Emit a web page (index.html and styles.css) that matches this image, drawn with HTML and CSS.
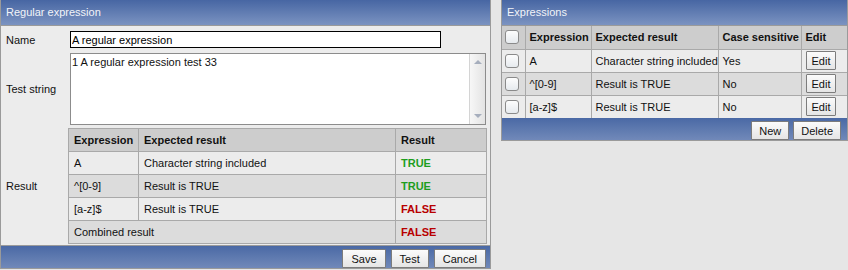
FILE: index.html
```html
<!DOCTYPE html>
<html lang="en">
<head>
    <meta charset="UTF-8">
    <title>Regular expression</title>
    <link rel="stylesheet" href="styles.css">
</head>
<body>
    <div class="page">
        <section class="panel panel-editor">
            <div class="panel-title">Regular expression</div>
            <div class="panel-body">
                <div class="form-row row-name">
                    <label class="form-label" for="exprName">Name</label>
                    <input class="text-input" id="exprName" type="text" value="A regular expression">
                </div>
                <div class="form-row row-test">
                    <label class="form-label" for="testString">Test string</label>
                    <div class="textbox">
                        <textarea id="testString">1 A regular expression test 33</textarea>
                        <div class="scrollbar">
                            <span class="arrow arrow-up"></span>
                            <span class="arrow arrow-down"></span>
                        </div>
                    </div>
                </div>
                <div class="form-row row-result">
                    <span class="form-label">Result</span>
                    <table class="grid result-table">
                        <thead>
                            <tr>
                                <th class="col-expr">Expression</th>
                                <th class="col-expected">Expected result</th>
                                <th class="col-result">Result</th>
                            </tr>
                        </thead>
                        <tbody>
                            <tr>
                                <td>A</td>
                                <td>Character string included</td>
                                <td class="ok">TRUE</td>
                            </tr>
                            <tr>
                                <td>^[0-9]</td>
                                <td>Result is TRUE</td>
                                <td class="ok">TRUE</td>
                            </tr>
                            <tr>
                                <td>[a-z]$</td>
                                <td>Result is TRUE</td>
                                <td class="fail">FALSE</td>
                            </tr>
                            <tr>
                                <td colspan="2">Combined result</td>
                                <td class="fail">FALSE</td>
                            </tr>
                        </tbody>
                    </table>
                </div>
            </div>
            <div class="panel-footer">
                <button class="btn">Save</button>
                <button class="btn">Test</button>
                <button class="btn">Cancel</button>
            </div>
        </section>

        <section class="panel panel-list">
            <div class="panel-title">Expressions</div>
            <table class="grid list-table">
                <thead>
                    <tr>
                        <th class="col-check"><span class="checkbox"></span></th>
                        <th class="col-expr">Expression</th>
                        <th class="col-expected">Expected result</th>
                        <th class="col-case">Case sensitive</th>
                        <th class="col-edit">Edit</th>
                    </tr>
                </thead>
                <tbody>
                    <tr>
                        <td class="col-check"><span class="checkbox"></span></td>
                        <td>A</td>
                        <td>Character string included</td>
                        <td>Yes</td>
                        <td><button class="btn btn-edit">Edit</button></td>
                    </tr>
                    <tr>
                        <td class="col-check"><span class="checkbox"></span></td>
                        <td>^[0-9]</td>
                        <td>Result is TRUE</td>
                        <td>No</td>
                        <td><button class="btn btn-edit">Edit</button></td>
                    </tr>
                    <tr>
                        <td class="col-check"><span class="checkbox"></span></td>
                        <td>[a-z]$</td>
                        <td>Result is TRUE</td>
                        <td>No</td>
                        <td><button class="btn btn-edit">Edit</button></td>
                    </tr>
                </tbody>
            </table>
            <div class="panel-footer list-footer">
                <button class="btn">New</button>
                <button class="btn">Delete</button>
            </div>
        </section>
    </div>
</body>
</html>
```

FILE: styles.css
```css
body {
    margin: 0;
    background: #e6e6e6;
    font-family: "Liberation Sans", Arial, sans-serif;
    font-size: 11px;
    color: #111;
}
.page {
    display: flex;
    align-items: flex-start;
    gap: 10px;
}
.panel {
    box-sizing: border-box;
    border: 1px solid #9a9a9a;
    border-top: none;
    background: #ececec;
}
.panel-editor {
    width: 491px;
}
.panel-list {
    width: 347px;
}
.panel-title {
    height: 25px;
    line-height: 25px;
    padding-left: 5px;
    color: #f2f4f8;
    background: linear-gradient(#4766a3, #7b93c1);
    border-bottom: 1px solid #9a9a9a;
}
.panel-body {
    padding: 5px 0 1px 0;
}
.form-row {
    display: flex;
    align-items: center;
}
.form-label {
    box-sizing: border-box;
    width: 67px;
    padding-left: 5px;
    flex-shrink: 0;
}
.row-test {
    margin-top: 5px;
}
.row-result {
    margin-top: 3px;
}
.text-input {
    box-sizing: border-box;
    width: 371px;
    height: 17px;
    margin: 0 0 0 2px;
    padding: 0 1px;
    border: 1px solid #000;
    font: inherit;
    color: #000;
    background: #fff;
    outline: none;
}
.textbox {
    box-sizing: border-box;
    display: flex;
    width: 416px;
    height: 72px;
    margin-left: 2px;
    border: 1px solid #8c8c8c;
    background: #fff;
}
.textbox textarea {
    flex: 1;
    margin: 0;
    padding: 2px 1px;
    border: none;
    resize: none;
    overflow: hidden;
    font: inherit;
    line-height: 13px;
    color: #111;
    outline: none;
}
.scrollbar {
    width: 16px;
    display: flex;
    flex-direction: column;
    align-items: center;
    justify-content: space-between;
    padding: 6px 0;
    box-sizing: border-box;
    border-left: 1px solid #d4d4d4;
    background: linear-gradient(to right, #f7f7f7, #e3e3e3);
}
.arrow {
    width: 0;
    height: 0;
    border-left: 4px solid transparent;
    border-right: 4px solid transparent;
}
.arrow-up {
    border-bottom: 4px solid #a6aebd;
}
.arrow-down {
    border-top: 4px solid #a6aebd;
}
.grid {
    border-collapse: collapse;
    table-layout: fixed;
}
.grid th, .grid td {
    box-sizing: border-box;
    height: 23px;
    border: 1px solid #a9a9a9;
    padding: 0 5px;
    text-align: left;
    white-space: nowrap;
}
.grid th {
    background: #cdcdcd;
    font-weight: bold;
}
.grid tbody tr:nth-child(odd) td {
    background: #ececec;
}
.grid tbody tr:nth-child(even) td {
    background: #dcdcdc;
}
.result-table {
    width: 419px;
}
.result-table .col-expr {
    width: 70px;
}
.result-table .col-expected {
    width: 257px;
}
.ok, .fail {
    font-weight: bold;
}
.ok {
    color: #1e9e1e;
}
.fail {
    color: #b80000;
}
.list-table {
    width: 345px;
    border-style: hidden;
}
.list-table th, .list-table td {
    padding: 0 4px;
}
.list-table thead th {
    border-top: 1px solid #9a9a9a;
}
.list-table .col-check {
    width: 23px;
    padding: 0 0 0 3px;
}
.list-table .col-expr {
    width: 66px;
}
.list-table .col-expected {
    width: 127px;
}
.list-table .col-case {
    width: 83px;
}
.checkbox {
    display: block;
    box-sizing: border-box;
    width: 14px;
    height: 14px;
    border: 1px solid #8a8a8a;
    border-radius: 3px;
    background: linear-gradient(#fdfdfd, #e6eaee);
}
.panel-footer {
    display: flex;
    justify-content: flex-end;
    align-items: flex-start;
    gap: 5px;
    height: 23px;
    box-sizing: border-box;
    padding: 3px 4px 0 0;
    border-top: 1px solid #9a9a9a;
    background: linear-gradient(#4a69a5, #7189b9);
}
.list-footer {
    height: 22px;
    border-top: none;
    gap: 4px;
    padding-right: 6px;
}
.btn {
    box-sizing: border-box;
    height: 19px;
    margin: 0;
    padding: 0 8px;
    border: 1px solid #7c7c7c;
    border-radius: 1px;
    background: linear-gradient(#fbfbfb, #e5e5e5);
    font: inherit;
    color: #111;
}
.list-footer .btn {
    padding: 0 7px;
}
.btn-edit {
    padding: 0 5px;
}
```
